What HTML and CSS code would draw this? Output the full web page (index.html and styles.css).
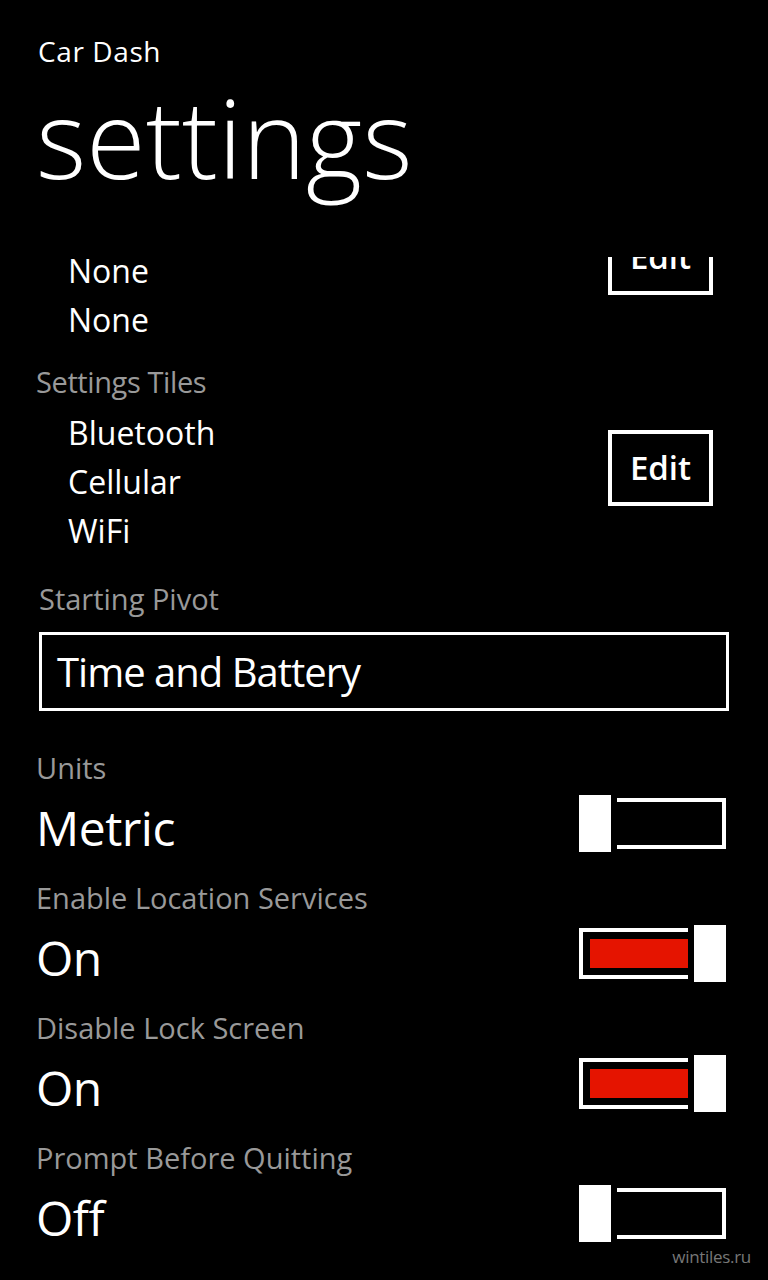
FILE: index.html
```html
<!DOCTYPE html>
<html lang="en">
<head>
    <meta charset="UTF-8">
    <meta name="viewport" content="width=device-width, initial-scale=1.0">
    <title>Car Dash - settings</title>
    <link rel="stylesheet" href="styles.css">
</head>
<body>
    <div class="header">
        <div class="app-title">Car Dash</div>
        <h1 class="page-title">settings</h1>
    </div>

    <div class="scroller">
        <div class="content">
            <!-- el primer grupo queda cortado arriba por el scroll -->
            <div class="tile-group">
                <div class="tile-list">
                    <div class="tile-item">None</div>
                    <div class="tile-item">None</div>
                </div>
                <button class="edit-btn">Edit</button>
            </div>

            <div class="label tiles-label">Settings Tiles</div>
            <div class="tile-group">
                <div class="tile-list">
                    <div class="tile-item">Bluetooth</div>
                    <div class="tile-item">Cellular</div>
                    <div class="tile-item">WiFi</div>
                </div>
                <button class="edit-btn">Edit</button>
            </div>

            <div class="label pivot-label">Starting Pivot</div>
            <div class="picker">Time and Battery</div>

            <div class="toggles">
                <div class="toggle-block">
                    <div class="label">Units</div>
                    <div class="toggle-row">
                        <div class="value">Metric</div>
                        <div class="switch">
                            <div class="thumb"></div>
                            <div class="track"></div>
                        </div>
                    </div>
                </div>
                <div class="toggle-block">
                    <div class="label">Enable Location Services</div>
                    <div class="toggle-row">
                        <div class="value">On</div>
                        <div class="switch on">
                            <div class="track"><div class="fill"></div></div>
                            <div class="thumb"></div>
                        </div>
                    </div>
                </div>
                <div class="toggle-block">
                    <div class="label">Disable Lock Screen</div>
                    <div class="toggle-row">
                        <div class="value">On</div>
                        <div class="switch on">
                            <div class="track"><div class="fill"></div></div>
                            <div class="thumb"></div>
                        </div>
                    </div>
                </div>
                <div class="toggle-block">
                    <div class="label">Prompt Before Quitting</div>
                    <div class="toggle-row">
                        <div class="value">Off</div>
                        <div class="switch">
                            <div class="thumb"></div>
                            <div class="track"></div>
                        </div>
                    </div>
                </div>
            </div>
        </div>
    </div>

    <div class="watermark">wintiles.ru</div>
</body>
</html>
```

FILE: styles.css
```css
/* Pantalla de ajustes, estilo Windows Phone */
body {
    margin: 0;
    background-color: #000;
    color: #fff;
    font-family: "Open Sans", "Noto Sans", sans-serif;
    width: 768px;
    height: 1280px;
    overflow: hidden;
    position: relative;
}
.header {
    padding: 31px 0 0 38px;
}
.app-title {
    font-size: 28px;
    line-height: 40px;
    letter-spacing: 0.6px;
}
.page-title {
    margin: 12px 0 0 -2px;
    font-size: 108px;
    font-weight: 300;
    line-height: 110px;
}
.scroller {
    margin-top: 64px;
    height: 1023px;
    overflow: hidden;
}
.content {
    margin-top: -38px;
}
.label {
    color: #999;
    font-size: 29px;
    line-height: 40px;
    padding-left: 36px;
}
.tile-group {
    display: flex;
    justify-content: space-between;
    align-items: flex-end;
    padding: 0 55px 0 68px;
}
.tile-item {
    font-size: 32px;
    line-height: 49px;
}
.edit-btn {
    margin-bottom: 49px;
    width: 105px;
    height: 76px;
    padding: 0;
    background: #000;
    color: #fff;
    border: 4px solid #fff;
    font-family: inherit;
    font-size: 33px;
    font-weight: 600;
    line-height: 68px;
}
.tiles-label {
    margin: 18px 0 6px;
    letter-spacing: -0.4px;
}
.pivot-label {
    margin-top: 24px;
    padding-left: 39px;
}
.picker {
    margin: 13px 39px 0 39px;
    border: 3px solid #fff;
    height: 73px;
    line-height: 73px;
    padding-left: 15px;
    font-size: 40px;
    letter-spacing: -1px;
}
.toggles {
    margin-top: 37px;
}
.toggle-block {
    margin-bottom: 20px;
}
.toggle-row {
    display: flex;
    justify-content: space-between;
    align-items: flex-start;
    margin-top: 7px;
    padding: 0 42px 0 36px;
}
.value {
    font-size: 48px;
    line-height: 60px;
    margin-top: 3px;
    letter-spacing: -0.5px;
}
.switch {
    width: 147px;
    height: 57px;
    display: flex;
    align-items: center;
    gap: 6px;
}
.thumb {
    width: 32px;
    height: 57px;
    background: #fff;
}
.track {
    flex: 1;
    height: 51px;
    box-sizing: border-box;
    border: 4px solid #fff;
    border-left: none;
}
.switch.on .track {
    border-left: 4px solid #fff;
    border-right: none;
    padding: 7px 0 7px 7px;
}
.fill {
    height: 100%;
    background: #e51400;
}
.watermark {
    position: absolute;
    right: 17px;
    bottom: 12px;
    color: #777;
    font-size: 17px;
    letter-spacing: -0.3px;
}
```
